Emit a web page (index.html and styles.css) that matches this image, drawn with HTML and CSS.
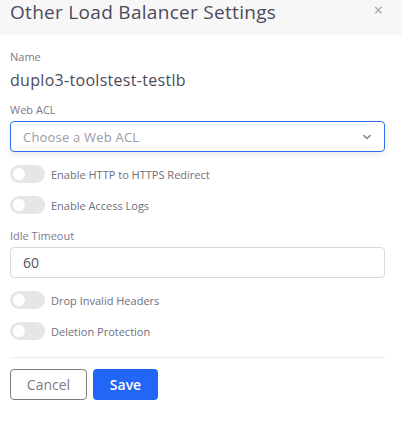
FILE: index.html
```html
<!DOCTYPE html>
<html>
<head>
<meta charset="utf-8">
<link rel="stylesheet" href="styles.css">
</head>
<body>
<div class="modal">
  <div class="header">
    <div class="title">Other Load Balancer Settings</div>
    <div class="close">&times;</div>
  </div>
  <div class="body">
    <div class="label l-name">Name</div>
    <div class="value">duplo3-toolstest-testlb</div>
    <div class="label l-acl">Web ACL</div>
    <div class="select">
      <span class="placeholder">Choose a Web ACL</span>
      <svg class="chev" width="10" height="6" viewBox="0 0 10 6"><path d="M1.5 1.2 L5 4.5 L8.5 1.2" fill="none" stroke="#888" stroke-width="1.6"/></svg>
    </div>
    <div class="toggle-row t1"><span class="switch"><span class="knob"></span></span><span class="tlabel">Enable HTTP to HTTPS Redirect</span></div>
    <div class="toggle-row"><span class="switch"><span class="knob"></span></span><span class="tlabel">Enable Access Logs</span></div>
    <div class="label l-idle">Idle Timeout</div>
    <div class="input">60</div>
    <div class="toggle-row t3"><span class="switch"><span class="knob"></span></span><span class="tlabel">Drop Invalid Headers</span></div>
    <div class="toggle-row"><span class="switch"><span class="knob"></span></span><span class="tlabel">Deletion Protection</span></div>
    <div class="divider"></div>
    <div class="buttons">
      <button class="btn cancel">Cancel</button>
      <button class="btn save">Save</button>
    </div>
  </div>
</div>
</body>
</html>
```
FILE: styles.css
```css
* { box-sizing: border-box; }
body {
  margin: 0;
  background: #fff;
  font-family: "Open Sans", "Noto Sans", sans-serif;
  color: #4b4a5c;
}
.modal { width: 402px; }
.header {
  height: 35px;
  background: #f7f7f7;
  display: flex;
  align-items: flex-start;
  justify-content: space-between;
  padding: 1px 19px 0 10px;
}
.title {
  font-size: 19px;
  line-height: 22px;
  color: #4b4a5c;
  letter-spacing: 0.3px;
}
.close {
  font-size: 16px;
  color: #a0a0aa;
  line-height: 16px;
  margin-top: 1px;
}
.body {
  padding: 0 17px 0 10px;
  display: flex;
  flex-direction: column;
}
.label {
  font-size: 11px;
  line-height: 14px;
  color: #7b7a8a;
}
.l-name { margin-top: 15px; }
.value {
  font-size: 16px;
  line-height: 20px;
  margin-top: 6px;
  color: #4b4a5c;
  letter-spacing: 0.3px;
}
.l-acl { margin-top: 13px; }
.select {
  margin-top: 4px;
  height: 31px;
  border: 1px solid #2e6cf0;
  border-radius: 4px;
  box-shadow: 0 3px 6px rgba(0,0,0,0.08);
  display: flex;
  align-items: center;
  justify-content: space-between;
  padding: 0 12px 0 12px;
}
.placeholder { font-size: 13px; color: #9c9ca6; letter-spacing: 0.2px; }
.toggle-row {
  display: flex;
  align-items: center;
  height: 18px;
  margin-top: 13px;
}
.switch {
  width: 35px;
  height: 18px;
  border-radius: 9px;
  background: #e6e6e6;
  position: relative;
  flex: none;
}
.knob {
  position: absolute;
  left: 3px;
  top: 3px;
  width: 12px;
  height: 12px;
  border-radius: 50%;
  background: #fff;
}
.tlabel {
  margin-left: 6px;
  font-size: 11px;
  color: #6f6e80;
}
.l-idle { margin-top: 15px; }
.input {
  margin-top: 4px;
  height: 31px;
  border: 1px solid #d9d9de;
  border-radius: 4px;
  display: flex;
  align-items: center;
  padding-left: 12px;
  font-size: 14px;
  color: #555566;
}
.divider {
  margin-top: 17px;
  height: 1px;
  flex: none;
  background: #ececec;
}
.buttons {
  margin-top: 11px;
  display: flex;
  gap: 6px;
}
.btn {
  height: 31px;
  border-radius: 4px;
  font-family: inherit;
  font-size: 14px;
  padding: 0;
}
.cancel {
  width: 77px;
  background: #fff;
  border: 1px solid #7d7d7d;
  color: #7b7b86;
}
.save {
  width: 65px;
  background: #2166f4;
  border: none;
  color: #fff;
  font-weight: 600;
}
```
